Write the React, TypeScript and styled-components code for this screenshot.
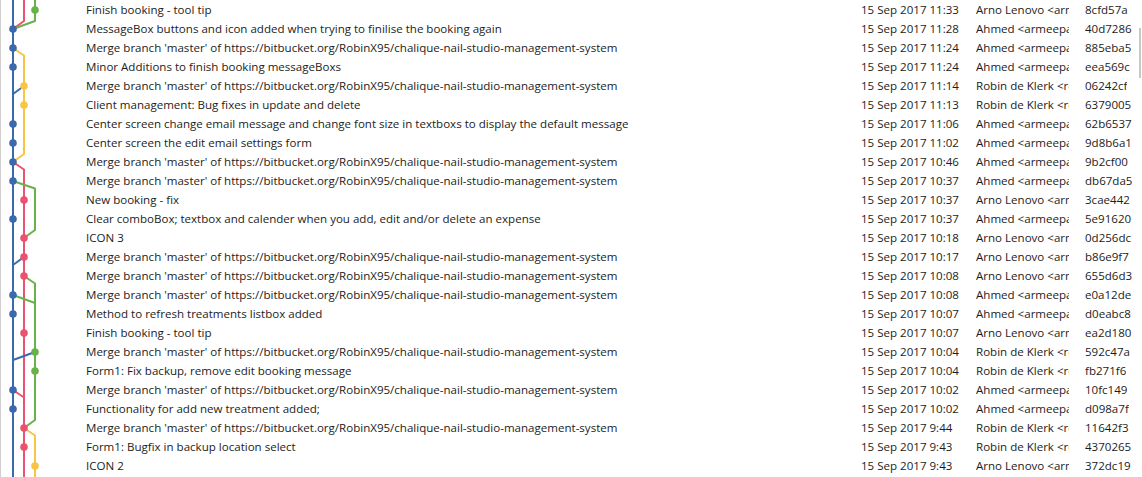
import React from "react";
import styled, { createGlobalStyle } from "styled-components";

const GlobalStyle = createGlobalStyle`
  html, body { margin: 0; padding: 0; background: #ffffff; }
  body { font-family: "Open Sans", "Noto Sans", sans-serif; }
`;

const ROW_H = 19;
const LANES = [12, 23, 34];
const BLUE = "#3a69ad";
const PINK = "#e9536f";
const GREEN = "#69b14a";
const YELLOW = "#f8c546";
const H = 477;

const yc = (i: number) => 10 + ROW_H * i;

type Pt = [number, number];
const [L0, L1, L2] = LANES;

const edges: { color: string; pts: Pt[] }[] = [
  { color: PINK, pts: [[L1, 0], [L1, yc(1) - 8], [L0, yc(1)]] },
  { color: GREEN, pts: [[L2, 0], [L2, yc(1) - 8], [L0, yc(1)]] },
  { color: YELLOW, pts: [[L0, yc(2)], [L1, yc(2) + 7.5], [L1, yc(8) - 8], [L0, yc(8)]] },
  { color: BLUE, pts: [[L1, yc(4)], [L0, yc(4) + 8]] },
  { color: PINK, pts: [[L0, yc(8)], [L1, yc(8) + 7.5], [L1, H]] },
  { color: GREEN, pts: [[L0, yc(9)], [L2, yc(9) + 7.5], [L2, yc(12) - 8], [L1, yc(12)]] },
  { color: BLUE, pts: [[L1, yc(13)], [L0, yc(13) + 8]] },
  { color: GREEN, pts: [[L1, yc(14)], [L2, yc(14) + 7.5], [L2, yc(22) - 8], [L1, yc(22)]] },
  { color: GREEN, pts: [[L0, yc(15)], [L2, yc(15) + 8]] },
  { color: BLUE, pts: [[L2, yc(18)], [L0, yc(18) + 8]] },
  { color: PINK, pts: [[L0, yc(20)], [L1, yc(20) + 7.5]] },
  { color: YELLOW, pts: [[L1, yc(22)], [L2, yc(22) + 7.5], [L2, H]] },
  { color: BLUE, pts: [[L0, 0], [L0, H]] },
];

const MERGE = "Merge branch 'master' of https://bitbucket.org/RobinX95/chalique-nail-studio-management-system";
const ARNO = "Arno Lenovo <arno";
const AHMED = "Ahmed <armeepatel";
const ROBIN = "Robin de Klerk <rob";

type Commit = { msg: string; time: string; author: string; hash: string; lane: number; color: string };

const commits: Commit[] = [
  { msg: "Finish booking - tool tip", time: "11:33", author: ARNO, hash: "8cfd57a", lane: 2, color: GREEN },
  { msg: "MessageBox buttons and icon added when trying to finilise the booking again", time: "11:28", author: AHMED, hash: "40d7286", lane: 0, color: BLUE },
  { msg: MERGE, time: "11:24", author: AHMED, hash: "885eba5", lane: 0, color: BLUE },
  { msg: "Minor Additions to finish booking messageBoxs", time: "11:24", author: AHMED, hash: "eea569c", lane: 0, color: BLUE },
  { msg: MERGE, time: "11:14", author: ROBIN, hash: "06242cf", lane: 1, color: YELLOW },
  { msg: "Client management: Bug fixes in update and delete", time: "11:13", author: ROBIN, hash: "6379005", lane: 1, color: YELLOW },
  { msg: "Center screen change email message and change font size in textboxs to display the default message", time: "11:06", author: AHMED, hash: "62b6537", lane: 0, color: BLUE },
  { msg: "Center screen the edit email settings form", time: "11:02", author: AHMED, hash: "9d8b6a1", lane: 0, color: BLUE },
  { msg: MERGE, time: "10:46", author: AHMED, hash: "9b2cf00", lane: 0, color: BLUE },
  { msg: MERGE, time: "10:37", author: AHMED, hash: "db67da5", lane: 0, color: BLUE },
  { msg: "New booking - fix", time: "10:37", author: ARNO, hash: "3cae442", lane: 1, color: PINK },
  { msg: "Clear comboBox; textbox and calender when you add, edit and/or delete an expense", time: "10:37", author: AHMED, hash: "5e91620", lane: 0, color: BLUE },
  { msg: "ICON 3", time: "10:18", author: ARNO, hash: "0d256dc", lane: 1, color: PINK },
  { msg: MERGE, time: "10:17", author: ARNO, hash: "b86e9f7", lane: 1, color: PINK },
  { msg: MERGE, time: "10:08", author: ARNO, hash: "655d6d3", lane: 1, color: PINK },
  { msg: MERGE, time: "10:08", author: AHMED, hash: "e0a12de", lane: 0, color: BLUE },
  { msg: "Method to refresh treatments listbox added", time: "10:07", author: AHMED, hash: "d0eabc8", lane: 0, color: BLUE },
  { msg: "Finish booking - tool tip", time: "10:07", author: ARNO, hash: "ea2d180", lane: 1, color: PINK },
  { msg: MERGE, time: "10:04", author: ROBIN, hash: "592c47a", lane: 2, color: GREEN },
  { msg: "Form1: Fix backup, remove edit booking message", time: "10:04", author: ROBIN, hash: "fb271f6", lane: 2, color: GREEN },
  { msg: MERGE, time: "10:02", author: AHMED, hash: "10fc149", lane: 0, color: BLUE },
  { msg: "Functionality for add new treatment added;", time: "10:02", author: AHMED, hash: "d098a7f", lane: 0, color: BLUE },
  { msg: MERGE, time: "9:44", author: ROBIN, hash: "11642f3", lane: 1, color: PINK },
  { msg: "Form1: Bugfix in backup location select", time: "9:43", author: ROBIN, hash: "4370265", lane: 1, color: PINK },
  { msg: "ICON 2", time: "9:43", author: ARNO, hash: "372dc19", lane: 2, color: YELLOW },
];

const Frame = styled.div`
  position: relative;
  display: flex;
  height: ${H}px;
  overflow: hidden;
  border-left: 1px solid #cfcfcf;
  background: #ffffff;
`;

const Graph = styled.svg`
  flex: 0 0 85px;
  display: block;
`;

const List = styled.div`
  display: flex;
  flex-direction: column;
  flex: 1;
  min-width: 0;
`;

const Row = styled.div`
  display: flex;
  align-items: center;
  height: ${ROW_H}px;
  font-size: 11.55px;
  color: #1c1c1c;
  white-space: nowrap;
`;

const Cell = styled.div<{ $w?: number; $gap?: number }>`
  flex: 0 0 ${(p) => (p.$w ? `${p.$w}px` : "auto")};
  margin-right: ${(p) => p.$gap ?? 0}px;
  overflow: hidden;
  line-height: ${ROW_H}px;
`;

const ScrollThumb = styled.div`
  position: absolute;
  top: 28px;
  right: 1px;
  width: 2px;
  height: 50px;
  background: #c8c8c8;
`;

export default function App() {
  return (
    <>
      <GlobalStyle />
      <Frame>
        <Graph width={85} height={H} viewBox={`0 0 85 ${H}`}>
          {edges.map((e, i) => (
            <polyline
              key={i}
              points={e.pts.map((p) => p.join(",")).join(" ")}
              fill="none"
              stroke={e.color}
              strokeWidth={2}
              strokeLinejoin="round"
            />
          ))}
          {commits.map((c, i) => (
            <circle key={c.hash} cx={LANES[c.lane]} cy={yc(i)} r={3.8} fill={c.color} />
          ))}
        </Graph>
        <List>
          {commits.map((c) => (
            <Row key={c.hash}>
              <Cell $w={775}>{c.msg}</Cell>
              <Cell $w={115}>15 Sep 2017 {c.time}</Cell>
              <Cell $w={93} $gap={16}>{c.author}</Cell>
              <Cell>{c.hash}</Cell>
            </Row>
          ))}
        </List>
        <ScrollThumb />
      </Frame>
    </>
  );
}
